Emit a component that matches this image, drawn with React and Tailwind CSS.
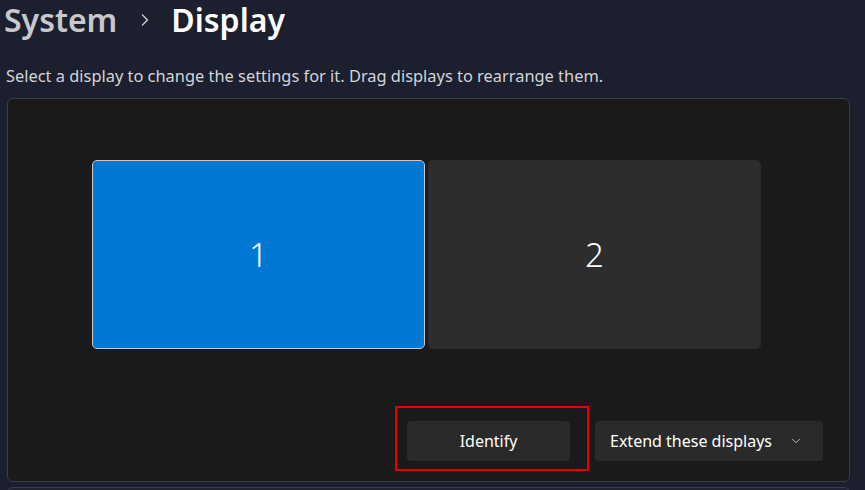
import { ChevronRight, ChevronDown } from "lucide-react";

const font = { fontFamily: '"Segoe UI", "Noto Sans", "Open Sans", sans-serif' };

const Monitor = ({ num, active }) => {
  return (
    <div
      className={
        active
          ? "w-[333px] h-[189px] rounded-[5px] border border-[#c9c9c9] bg-[#0078d4] flex items-center justify-center"
          : "w-[333px] h-[189px] rounded-[5px] bg-[#2d2d2d] flex items-center justify-center"
      }
    >
      <span className="text-[33px] text-white font-light leading-none">{num}</span>
    </div>
  );
};

export default function App() {
  return (
    <div className="w-[865px] h-[490px] overflow-hidden bg-[#1b1f2e] text-white" style={font}>
      <div className="flex items-center h-[40px] pl-[4px]">
        <span className="text-[32px] font-semibold text-[#c8c8cc] leading-[40px]">System</span>
        <ChevronRight className="ml-[18px] mr-[16px] text-[#c8c8cc]" size={20} strokeWidth={1.75} />
        <span className="text-[32px] font-semibold text-white leading-[40px]">Display</span>
      </div>
      <div className="mt-[26px] pl-[6px] text-[16.4px] text-[#d4d4d8] leading-[20px]">
        Select a display to change the settings for it. Drag displays to rearrange them.
      </div>
      <div className="mt-[12px] ml-[7px] w-[843px] h-[384px] rounded-[6px] border border-[#3b3e4a] bg-[#1a1a1a] flex flex-col">
        <div className="flex gap-[3px] pt-[61px] pl-[84px]">
          <Monitor num="1" active />
          <Monitor num="2" />
        </div>
        <div className="flex justify-end items-center gap-[25px] mt-[72px] pr-[26px]">
          <div className="relative">
            <div className="absolute -left-[12px] -top-[15px] -right-[19px] -bottom-[10px] border-2 border-[#e50000]" />
            <button className="w-[163px] h-[40px] rounded-[4px] bg-[#2a2a2a] text-[16px] text-white">
              Identify
            </button>
          </div>
          <button className="w-[228px] h-[40px] rounded-[4px] bg-[#2a2a2a] text-[16px] text-white flex items-center justify-between pl-[15px] pr-[20px]">
            <span>Extend these displays</span>
            <ChevronDown size={14} strokeWidth={1.5} className="text-[#d0d0d0]" />
          </button>
        </div>
      </div>
      <div className="mt-[5px] ml-[7px] w-[843px] h-[20px] rounded-[6px] border border-[#3b3e4a] bg-[#1f2332]" />
    </div>
  );
}
